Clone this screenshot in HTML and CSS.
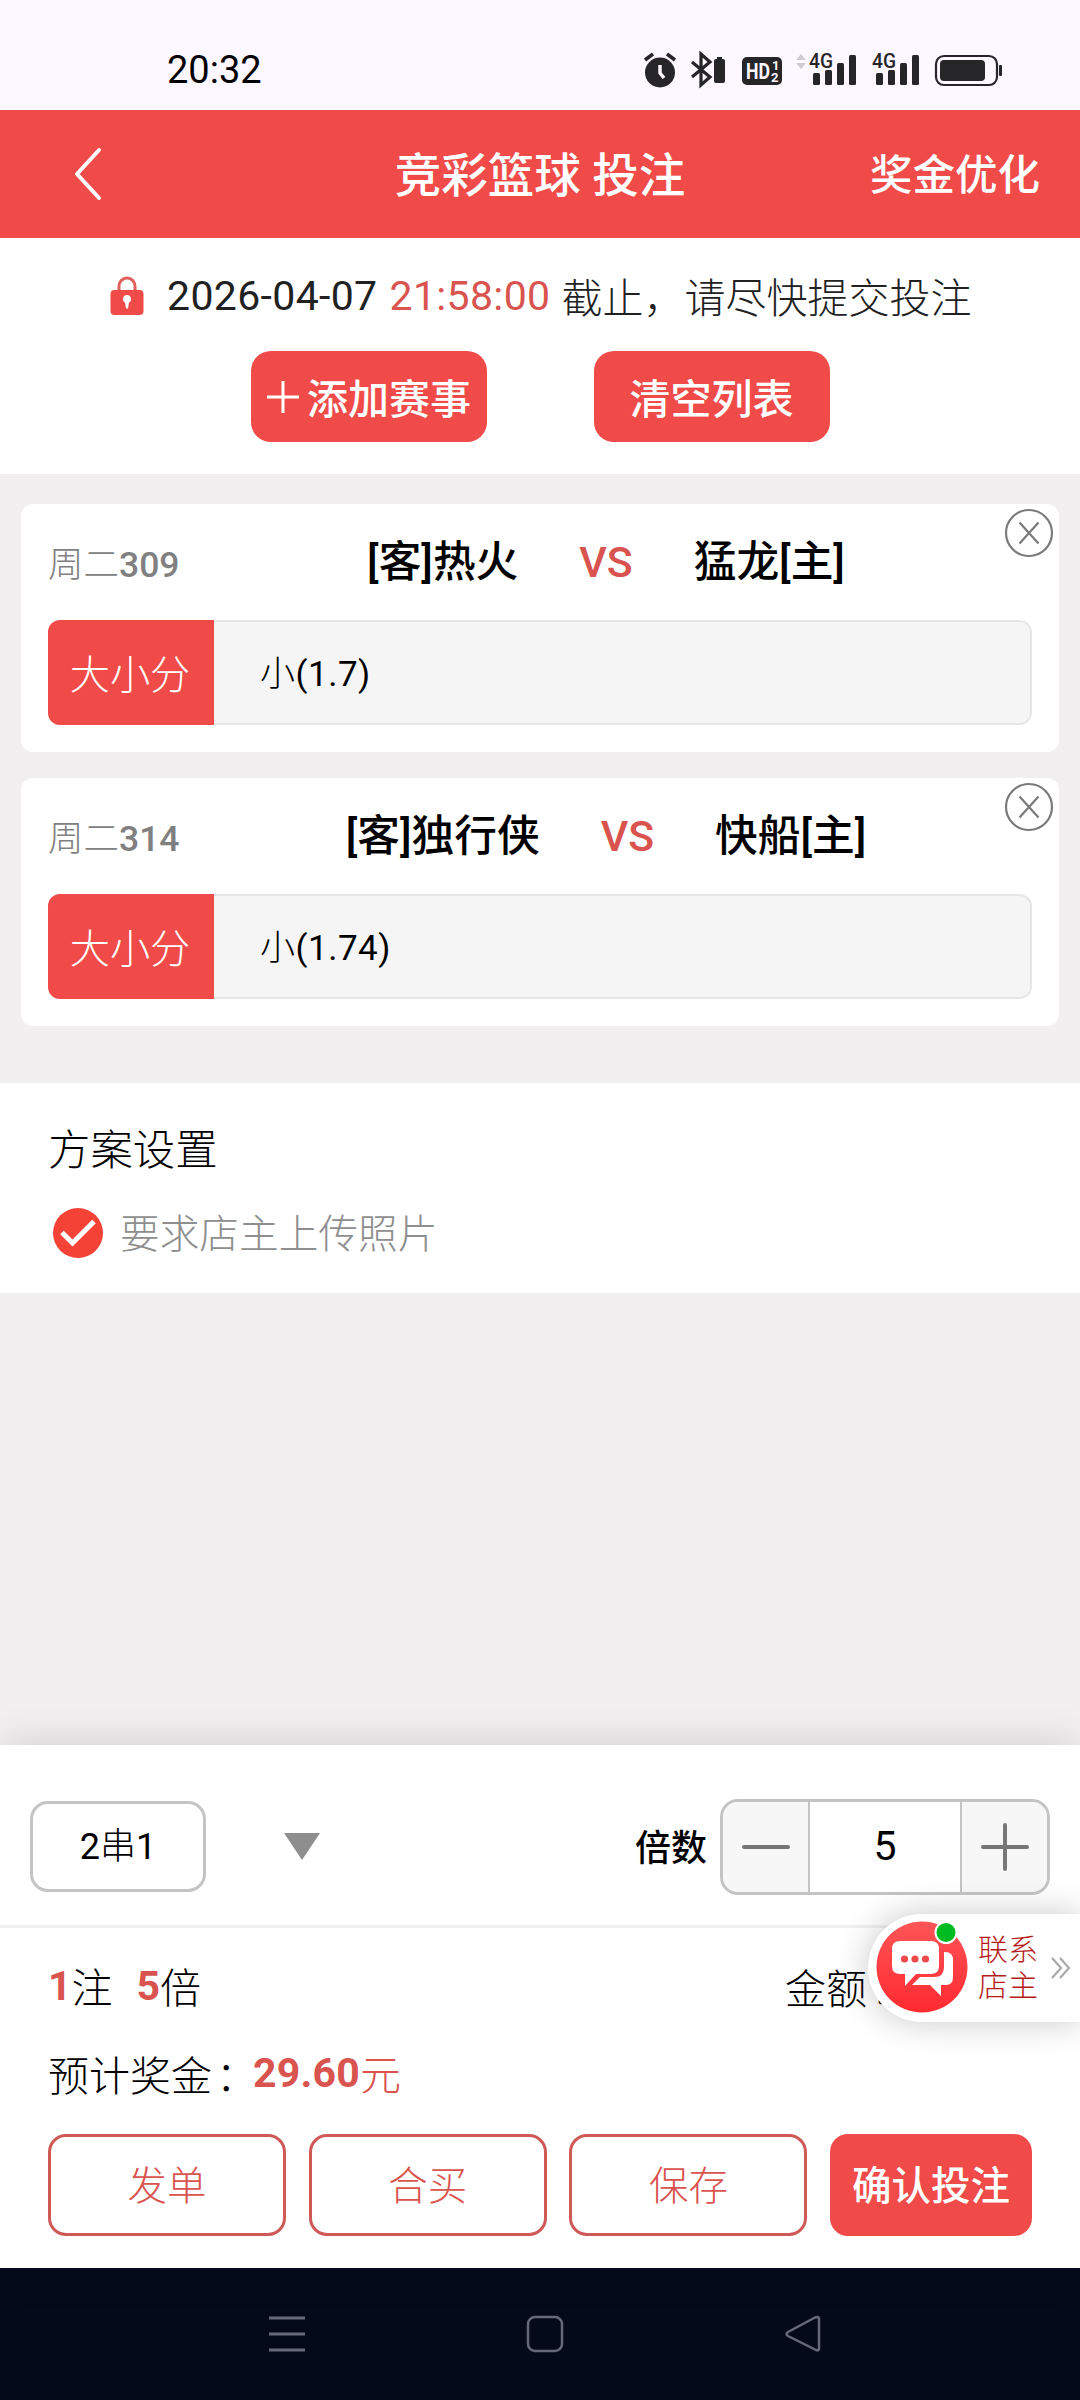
FILE: index.html
```html
<!DOCTYPE html>
<html lang="zh-CN">
<head>
<meta charset="utf-8">
<title>竞彩篮球 投注</title>
<link rel="stylesheet" href="styles.css">
</head>
<body>
<div class="screen">
  <div class="status">
    <span class="clock">20:32</span>
    <svg class="status-icons" width="384" height="40" viewBox="0 0 384 40" fill="#262528">
      <circle cx="20" cy="23.500" r="15"/>
      <path d="M5 11l8-6M35 11l-8-6" stroke="#262528" stroke-width="3.500"/>
      <path d="M20 16v8l4 5" fill="none" stroke="#fdf7ff" stroke-width="3.500"/>
      <path d="M52 13l18 15-9 8V5l9 8-18 15" fill="none" stroke="#262528" stroke-width="3.200"/>
      <rect x="74" y="10" width="11" height="24" rx="2"/><rect x="77" y="8" width="5" height="3"/>
      <rect x="102" y="8" width="40" height="28" rx="5"/>
      <text class="badge-text" x="106" y="30" fill="#fdf7ff" textLength="24" lengthAdjust="spacingAndGlyphs">HD</text>
      <text class="badge-sub" x="132" y="21" fill="#fdf7ff">1</text>
      <text class="badge-sub" x="131" y="33" fill="#fdf7ff">2</text>
      <path d="M156 11l5-6 5 6zM156 14l5 6 5-6z" fill="#d0cad2"/>
      <text class="net-text" x="169" y="19" textLength="24" lengthAdjust="spacingAndGlyphs">4G</text>
      <rect x="173" y="24" width="7" height="12" rx="1.500"/><rect x="185" y="21" width="7" height="15" rx="1.500"/><rect x="197" y="14" width="7" height="22" rx="1.500"/><rect x="209" y="6" width="7" height="30" rx="1.500"/>
      <text class="net-text" x="232" y="19" textLength="24" lengthAdjust="spacingAndGlyphs">4G</text>
      <rect x="236" y="24" width="7" height="12" rx="1.500"/><rect x="248" y="21" width="7" height="15" rx="1.500"/><rect x="260" y="14" width="7" height="22" rx="1.500"/><rect x="272" y="6" width="7" height="30" rx="1.500"/>
      <rect x="296" y="7" width="61" height="29" rx="8" fill="none" stroke="#262528" stroke-width="2.200"/>
      <rect x="300" y="11" width="45" height="21" rx="4"/><rect x="359" y="16" width="3" height="11" rx="1"/>
    </svg>
  </div>

  <header class="topbar">
    <svg class="back" width="30" height="56" viewBox="0 0 30 56" fill="none" stroke="#fff" stroke-width="4" stroke-linecap="round" stroke-linejoin="round"><path d="M26 4L4 28l22 24"/></svg>
    <h1 class="title">竞彩篮球 投注</h1>
    <span class="optimize">奖金优化</span>
  </header>

  <section class="deadline">
    <div class="deadline-line">
      <svg class="lock" width="34" height="40" viewBox="0 0 34 40"><path d="M9 15v-5a8 8 0 0 1 16 0v5" fill="none" stroke="#e0605e" stroke-width="3"/><rect x="0.500" y="14" width="33" height="25" rx="4" fill="#f04b49"/><path d="M17 19a4 4 0 0 1 2 7.500l-1 6h-2l-1-6a4 4 0 0 1 2-7.500z" fill="#fff"/></svg>
      <span class="date">2026-04-07</span>
      <span class="time">21:58:00</span>
      <span class="notice">截止，请尽快提交投注</span>
    </div>
    <div class="deadline-buttons">
      <div class="btn-red"><svg width="34" height="34" viewBox="0 0 34 34" stroke="#fff" stroke-width="3"><path d="M1 17h32M17 1v32"/></svg><span>添加赛事</span></div>
      <div class="btn-red"><span>清空列表</span></div>
    </div>
  </section>

  <section class="matches">
    <article class="card">
      <svg class="close" width="50" height="50" viewBox="0 0 50 50" fill="none" stroke="#7a7a7a" stroke-width="2.200"><circle cx="25" cy="25" r="23"/><path d="M15.500 14.500l19 21M34.500 14.500l-19 21"/></svg>
      <div class="match">
        <span class="code">周二<b>309</b></span>
        <div class="teams"><span>[客]热火</span><span class="vs">VS</span><span>猛龙[主]</span></div>
      </div>
      <div class="pick"><span class="kind">大小分</span><span class="choice">小<i>(1.7)</i></span></div>
    </article>
    <article class="card">
      <svg class="close" width="50" height="50" viewBox="0 0 50 50" fill="none" stroke="#7a7a7a" stroke-width="2.200"><circle cx="25" cy="25" r="23"/><path d="M15.500 14.500l19 21M34.500 14.500l-19 21"/></svg>
      <div class="match">
        <span class="code">周二<b>314</b></span>
        <div class="teams"><span>[客]独行侠</span><span class="vs">VS</span><span>快船[主]</span></div>
      </div>
      <div class="pick"><span class="kind">大小分</span><span class="choice">小<i>(1.74)</i></span></div>
    </article>
  </section>

  <section class="plan">
    <h2 class="plan-title">方案设置</h2>
    <div class="plan-option">
      <svg width="50" height="50" viewBox="0 0 50 50"><circle cx="25" cy="25" r="25" fill="#f44336"/><path d="M9 24.500l10.500 10.500L41 13.500" fill="none" stroke="#fff" stroke-width="5"/></svg>
      <span>要求店主上传照片</span>
    </div>
  </section>

  <footer class="bet">
    <div class="bet-top">
      <span class="pass"><i>2</i>串<i>1</i></span>
      <svg class="caret" width="36" height="27" viewBox="0 0 36 27"><path d="M0 0h36L18 27z" fill="#8e8e8e"/></svg>
      <span class="times-label">倍数</span>
      <div class="stepper">
        <span class="step"><svg width="48" height="48" viewBox="0 0 48 48" stroke="#777" stroke-width="4" stroke-linecap="round"><path d="M2 24h44"/></svg></span>
        <span class="count">5</span>
        <span class="step"><svg width="48" height="48" viewBox="0 0 48 48" stroke="#777" stroke-width="4" stroke-linecap="round"><path d="M2 24h44M24 2v44"/></svg></span>
      </div>
    </div>
    <div class="summary">
      <div class="summary-row">
        <span class="stat"><b>1</b><span class="cn">注</span></span><span class="stat"><b>5</b><span class="cn">倍</span></span>
        <span class="amount">金额<span class="colon">：</span></span>
      </div>
      <div class="summary-row second"><span class="label">预计奖金<span class="colon">：</span></span><span class="prize"><b>29.60</b><span class="cn">元</span></span></div>
    </div>
    <div class="actions">
      <span class="act">发单</span><span class="act">合买</span><span class="act">保存</span><span class="act confirm">确认投注</span>
    </div>
    <div class="contact">
      <svg class="chat" width="92" height="94" viewBox="0 0 92 94">
        <defs><linearGradient id="chatbg" x1="0" y1="0" x2="0" y2="1"><stop offset="0" stop-color="#ff5558"/><stop offset="1" stop-color="#ff2a30"/></linearGradient></defs>
        <circle cx="46" cy="46" r="45.500" fill="url(#chatbg)"/>
        <path d="M68 31h1q8 0 8 8v17q0 8-7 8h-5v11L54 64H36l8-8h14q10 0 10-10z" fill="#fff"/>
        <path d="M24 20h31q8 0 8 8v17q0 8-8 8H40L29 65V53h-5q-8 0-8-8V28q0-8 8-8z" fill="#fff"/>
        <g fill="#ee4a4c"><circle cx="28.500" cy="38" r="3.600"/><circle cx="39" cy="38" r="3.600"/><circle cx="49.500" cy="38" r="3.600"/></g>
        <circle cx="70" cy="11.500" r="10.500" fill="#0b2" stroke="#fff" stroke-width="2"/>
      </svg>
      <span class="contact-text">联系<br>店主</span>
      <svg class="more" width="20" height="22" viewBox="0 0 20 22" fill="none" stroke="#aaa" stroke-width="2.200"><path d="M1 1l9 10-9 10M9 1l9 10-9 10"/></svg>
    </div>
  </footer>

  <nav class="sysnav">
    <svg width="38" height="38" viewBox="0 0 38 38" stroke="#666a78" stroke-width="3"><path d="M1 3h36M1 19h36M1 35h36"/></svg>
    <svg width="38" height="38" viewBox="0 0 38 38" fill="none" stroke="#666a78" stroke-width="2.500"><rect x="2" y="2" width="34" height="34" rx="7"/></svg>
    <svg width="38" height="38" viewBox="0 0 38 38" fill="none" stroke="#666a78" stroke-width="2.500" stroke-linejoin="round"><path d="M33 2q2 0 2 2v30q0 2-3 1L4 21q-3-2 0-4L31 2.500z"/></svg>
  </nav>
</div>
</body>
</html>
```

FILE: styles.css
```css
* { box-sizing: border-box; margin: 0; padding: 0; }
body {
  width: 1080px;
  font-family: Roboto, "Noto Sans CJK SC", sans-serif;
  font-weight: 300;
  font-size: 41px;
  line-height: 1;
  color: #000;
  background: #f1eff0;
}
i { font-style: normal; font-weight: 400; }
svg { display: block; flex: none; }
span { white-space: nowrap; }
.screen { display: flex; flex-direction: column; height: 2400px; overflow: hidden; }

.status { display: flex; align-items: center; justify-content: space-between; height: 110px; padding: 28px 56px 0 167px; background: #fdf7ff; }
.clock { padding-top: 2px; font-size: 38px; font-weight: 400; }
.badge-text { font: 700 22px Roboto, sans-serif; }
.badge-sub { font: 700 13px Roboto, sans-serif; }
.net-text { font: 500 20px Roboto, sans-serif; }

.topbar { display: grid; grid-template-columns: 300px 1fr 300px; align-items: center; height: 128px; color: #fff; background: #f04b49; }
.back { margin-left: 73px; }
.title { padding-top: 4px; font-size: 46.500px; font-weight: 500; text-align: center; }
.optimize { justify-self: end; margin-right: 40px; padding-top: 5px; font-size: 42.500px; font-weight: 500; }

.deadline { height: 236px; padding-top: 31px; background: #fff; }
.deadline-line { display: flex; align-items: center; height: 54px; padding-left: 110px; color: #212121; }
.date { margin-left: 23px; font-weight: 400; letter-spacing: .35px; }
.time { margin-left: 12px; font-weight: 400; letter-spacing: .35px; color: #d9534f; }
.notice { margin-left: 11px; padding-top: 6px; }
.deadline-buttons { display: flex; gap: 107px; justify-content: center; margin-top: 28px; }
.btn-red { display: flex; align-items: center; justify-content: center; gap: 7px; width: 236px; height: 91px; border-radius: 20px; font-size: 41px; font-weight: 500; color: #fff; background: #f04b49; }
.btn-red span { padding-top: 8px; }

.matches { display: flex; flex-direction: column; gap: 26px; padding: 30px 21px 0; }
.card { position: relative; height: 248px; padding: 0 27px; border-radius: 12px; background: #fff; }
.close { position: absolute; top: 4px; right: 5px; }
.match { display: flex; align-items: center; height: 116px; padding-top: 1px; }
.code { width: 200px; padding-top: 6px; font-size: 35.500px; color: #808080; }
.code b { font-weight: 500; }
.teams { display: flex; justify-content: center; gap: 61px; width: 716px; font-size: 42.700px; font-weight: 500; }
.vs { color: #d9534f; }
.pick { display: flex; height: 105px; border-radius: 12px; overflow: hidden; }
.kind { display: flex; align-items: center; justify-content: center; width: 166px; padding: 7px 2px 0 0; font-size: 40.200px; color: #fff; background: #f04b49; }
.choice { display: flex; align-items: center; flex: 1; padding: 3px 0 0 46px; border: 2px solid #e6e6e6; border-left: 0; border-radius: 0 12px 12px 0; background: #f5f5f5; font-size: 35px; letter-spacing: .5px; }

.plan { height: 210px; margin-top: 57px; padding: 47px 48px 0; background: #fff; }
.plan-title { font-size: 42.400px; font-weight: 300; }
.plan-option { display: flex; align-items: center; gap: 17px; margin-top: 36px; padding-left: 5px; font-size: 39.700px; color: #8e8e8e; }
.plan-option span { padding-top: 3px; }

.bet { position: relative; height: 523px; margin-top: auto; background: #fff; box-shadow: 0 0 40px rgba(0, 0, 0, .14); }
.bet-top { display: flex; align-items: center; height: 183px; padding: 23px 30px 0; border-bottom: 3px solid #f0f0f0; }
.pass { display: flex; align-items: center; justify-content: center; width: 176px; height: 91px; border: 3px solid #c4c4c4; border-radius: 18px; font-size: 36px; }
.caret { margin-left: 78px; }
.times-label { margin-left: auto; padding-top: 5px; font-size: 36px; font-weight: 500; }
.stepper { display: flex; width: 330px; height: 96px; margin-left: 13px; border: 3px solid #c4c4c4; border-radius: 18px; overflow: hidden; }
.step { display: flex; align-items: center; justify-content: center; width: 85px; background: #f7f7f7; }
.count { flex: 1; display: flex; align-items: center; justify-content: center; border: solid #c4c4c4; border-width: 0 2px; font-weight: 400; }
.summary { padding: 33px 48px 0; }
.summary b { font-weight: 700; color: #d9534f; }
.cn { vertical-align: -3px; }
.summary-row { display: flex; align-items: center; height: 54px; }
.summary-row.second { margin-top: 33px; }
.stat { margin-right: 24px; }
.amount { margin-left: auto; margin-right: 124px; padding-top: 4px; }
.label { padding-top: 4px; }
.colon { display: inline-block; width: 41px; padding-left: 4px; }
.prize { letter-spacing: .2px; color: #d9534f; }
.actions { display: grid; grid-template-columns: 238px 238px 238px 202px; gap: 22.700px; margin-top: 32px; padding-left: 48px; }
.act { display: flex; align-items: center; justify-content: center; height: 102px; padding-top: 3px; border: 3px solid #cf5957; border-radius: 18px; font-size: 39.500px; color: #d9534f; }
.confirm { border: 0; font-weight: 500; color: #fff; background: #f04b49; }
.contact { position: absolute; top: 169px; right: 0; display: flex; align-items: center; width: 212px; height: 108px; padding-left: 8px; border-radius: 55px 0 0 55px; background: #fff; box-shadow: 0 0 34px rgba(0, 0, 0, .22); }
.contact-text { margin-left: 10px; font-size: 30px; line-height: 36.500px; color: #b71c1c; }
.more { margin-left: 13px; }

.sysnav { display: flex; justify-content: center; gap: 220px; height: 132px; padding: 47px 0 0 10px; background: #040a1a; }
```
